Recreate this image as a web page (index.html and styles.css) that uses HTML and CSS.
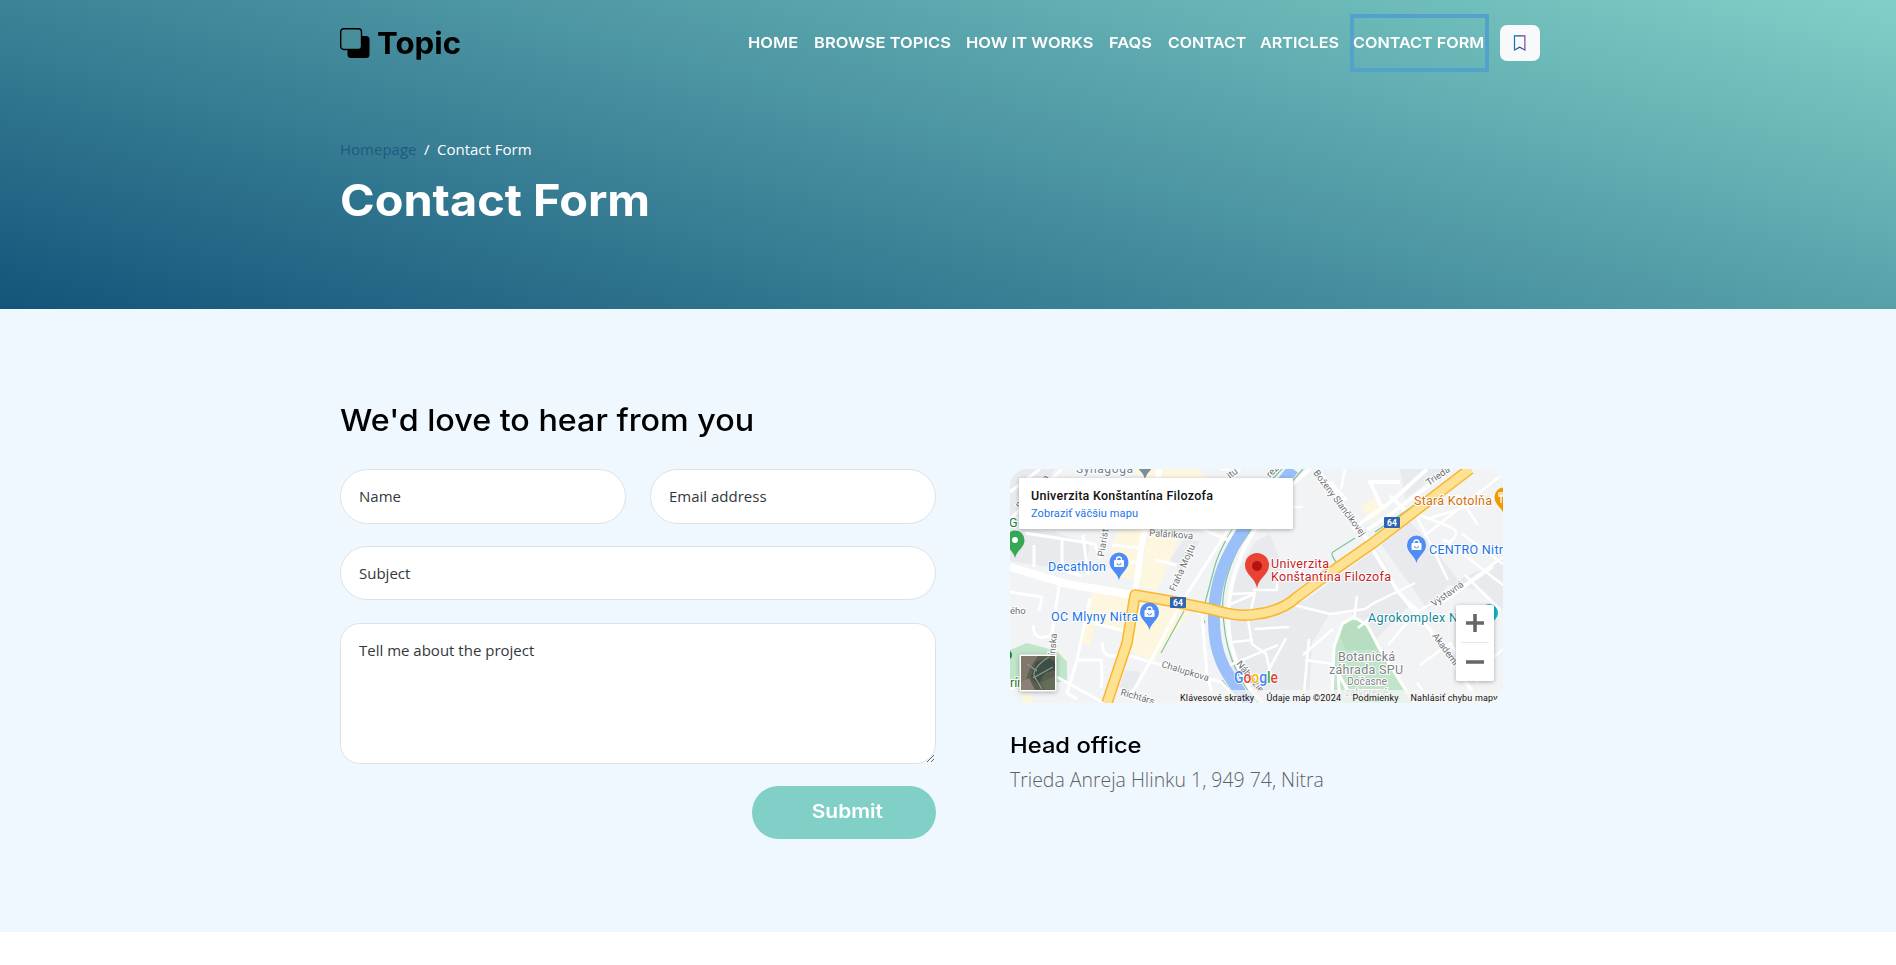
FILE: index.html
```html
<!DOCTYPE html>
<html lang="en">
<head>
<meta charset="utf-8">
<title>Contact Form</title>
<link rel="stylesheet" href="styles.css">
</head>
<body>
<header class="hero">
  <nav class="nav">
    <a class="brand"><svg class="brand-icon" width="30" height="31" viewBox="0 0 30 31"><rect x="7.5" y="8" width="22" height="22" rx="3.5"/><rect class="brand-clear" x=".7" y=".7" width="20.8" height="20.8" rx="3"/></svg><span class="brand-name">Topic</span></a>
    <div class="links">
      <a class="link l1"><span class="label">HOME</span></a><a class="link l2"><span class="label">BROWSE TOPICS</span></a><a class="link l3"><span class="label">HOW IT WORKS</span></a><a class="link l4"><span class="label">FAQS</span></a><a class="link l5"><span class="label">CONTACT</span></a><a class="link l6"><span class="label">ARTICLES</span></a><a class="link l7 focused"><span class="label">CONTACT FORM</span></a>
      <a class="bookmark"><svg width="14" height="16" viewBox="0 0 14 16"><defs><linearGradient id="bm"><stop stop-color="#0876b5"/><stop offset=".5" stop-color="#33466d"/><stop offset="1" stop-color="#81479b"/></linearGradient></defs><path d="M1.5 .8h10.4V15L6.7 12.3 1.5 15z" fill="none" stroke="url(#bm)" stroke-width="1.2"/></svg></a>
    </div>
  </nav>
  <div class="crumbs"><span class="crumb-home">Homepage</span><span>/</span><span class="crumb-here">Contact Form</span></div>
  <h1 class="title">Contact Form</h1>
</header>
<main class="main">
  <h2 class="heading">We'd love to hear from you</h2>
  <div class="columns">
    <form class="form">
      <input class="field" placeholder="Name">
      <input class="field" placeholder="Email address">
      <input class="field wide subject" placeholder="Subject">
      <textarea class="field wide message" placeholder="Tell me about the project"></textarea>
      <button class="submit" type="button"><span class="submit-label">Submit</span></button>
    </form>
    <aside class="office">
      <svg class="map" width="493" height="234" viewBox="1010 469 493 234">
        <defs>
          <g id="pin"><path d="M0 18C-2 10-9.5 8-9.5 0a9.5 9.5 0 0 1 19 0C9.500 8 2 10 0 18z"/></g>
          <g id="bag"><rect x="-5" y="-2" width="10" height="7" rx="1" fill="#fff"/><path d="M-2.500-1v-1.500a2.500 2.500 0 0 1 5 0V-1" fill="none" stroke="#fff" stroke-width="1.300"/><path d="M-2 1a2 2 0 0 0 4 0" fill="none" stroke="#4f8df5"/></g>
        </defs>
        <rect x="1010" y="469" width="493" height="234" fill="#f1f3f4"/>
        <!-- built-up and campus areas -->
        <g fill="#e8eaed">
          <path d="M1235 575l20-33 15-8 8 20 4 22h20l13 5-27 19-35 14-25-2z"/>
          <path d="M1228 618l30 2 48-20 70-51 22 38 12 18-40 40-20-35-20 3-18 30-3 60h-60l-18-35z"/>
          <path d="M1378 540l30-20 20 20 30 40 45-20v50l-20-20-35-5-20 25-25-35z"/>
          <path d="M1010 469h45l-20 30-25 20zM1010 528l45 4 35 13-5 28-75-12zM1125 670l15 2-5 18-15-2z"/>
          <path d="M1400 469h45l-40 30zM1170 560l15-22 15 3-18 30z"/>
        </g>
        <g fill="#fef7e0">
          <path d="M1127 469h70l12 10h-60zM1118 532l26-3-2 52-27-5-3-30zM1148 529l34 2-25 60-17-4zM1092 590l38 6-8 36-27-7-5 21-8-2zM1140 603l50 9-36 49-25-10zM1361 506l16-10 8 14-14 11zM1160 540l15 6-10 16-15-4zM1022 703v-8l8-3 4 11z"/>
        </g>
        <path d="M1010 650l17-7 30 8 10 11v20h-57z" fill="#c1e5c9"/>
        <path d="M1332 703l3-58 7-20 12-8 13 7 14 26 33 53z" fill="#c1e5c9"/>
        <path d="M1346 650c-12-20 0-30 9-30s16 12 22 30z" fill="#b7dec0"/>
        <!-- parkway lines -->
        <g fill="none" stroke="#7dc696" stroke-width="1.200">
          <path d="M1282 469q-58 60-68 100l-10 38M1303 469q-20 24-45 50l-20 30q-20 40-14 75 4 45 34 79M1184 611l-23 42M1188 603l12 8 5 12M1355 538l-22 14q-3 2 3 10M1375 532l50-34 42-29M1222 680l14 18"/>
        </g>
        <path d="M1293 469C1270 500 1255 510 1243 530S1215 573 1214 615s12 58 34 88" fill="none" stroke="#9bbff9" stroke-width="12"/>
        <!-- side streets -->
        <g fill="none" stroke="#fff" stroke-width="3" stroke-linejoin="round">
          <path d="M1010 519l52-50M1010 492l30-23M1025 533l70 11 5 14M1062 540v30l20 6M1034 545v22M1083 535l5 40M1060 580l-10 67M1010 592l32 5-3 14M1033 625q1 18 18 10M1090 598l-13 62-10 33 10 6M1077 660h24q2 16 0 28M1090 622l38 10M1103 642q-2 10 6 14h16M1057 677l47 26M1010 690l15-10"/>
          <path d="M1127 655l24 7 70 20 20 21M1228 530l-45 70-33 62-18 31M1200 528l28 12 12-20M1187 603l15 12 5 60 8 28M1115 563l28-1M1112 545l30 3M1120 485l5-16M1250 483h17M1220 469h10M1240 469l-30 40M1155 560l22 5"/>
          <path d="M1232 594l23-1-5 20M1231 604l23-10M1253 590h24v-12l33-1M1248 620l4 24 14 10 7 30M1255 629l34-2M1233 642l20-2M1286 638l-20 37-20 5M1309 639l-6 64M1305 660l28 4M1303 655l30-26M1294 605l36 9 35-5 12-8M1357 596l-3 24M1370 618l-12 10M1230 665l48-20" stroke-width="2.500"/>
          <path d="M1367 530l24-16 60-45M1352 529l40-28 35-32M1382 508l-12-26 30 0M1390 496l15 14M1330 482l16 18M1317 469l46 64 34 57 33 40 50 73" stroke-width="3.800"/>
          <path d="M1303 507h-18M1345 469l-4 20M1415 513l35 14q12 5 0 15l-8-2M1415 513l15 30 18 37M1424 536l79-62M1430 518l73-22M1417 612l50-29 36-26M1400 595l18 15-30 35M1445 540l58 45M1462 534l41 30M1443 602l50-35M1465 575l35 35M1370 605l45-22M1420 665l30-22 28 40M1432 703l-15-20M1480 669l23-20M1478 525l-20-30" stroke-width="2.500"/>
          <path d="M1332 703l2-56 8-23 12-7 13 8 14 26 33 52M1340 703l-2-30 10 18"/>
        </g>
        <path d="M1310 469q-42 35-65 77-26 60-12 105 10 35 30 52" fill="none" stroke="#fff" stroke-width="4"/>
        <path d="M1010 567l57 17 66 11" fill="none" stroke="#fff" stroke-width="8"/>
        <path d="M1135 593l8-56 17-68" fill="none" stroke="#fff" stroke-width="6"/>
        <!-- route 64 -->
        <g fill="none" stroke-linejoin="round"><path d="M1107 703l20-60 8-48 35 6 40 8q30 9 47 5 25-3 40-17l27-20 49-34 97-74" stroke="#f9b62e" stroke-width="11.500"/><path d="M1107 703l20-60 8-48 35 6 40 8q30 9 47 5 25-3 40-17l27-20 49-34 97-74" stroke="#fde293" stroke-width="8.500"/></g>
        <g class="shield"><rect x="1170" y="597" width="16" height="11" rx="1"/><text x="1178" y="606">64</text><rect x="1384" y="517" width="16" height="11" rx="1"/><text x="1392" y="526">64</text></g>
        <!-- street names -->
        <g class="street">
          <text x="1076" y="473" class="poi" textLength="57">Synagoga</text>
          <text transform="translate(1149 536) rotate(4)" textLength="44">Palárikova</text>
          <text transform="translate(1175 592) rotate(-66)" textLength="50">Fraňa Mojtu</text>
          <text transform="translate(1104 557) rotate(-81)" textLength="28">Piarist</text>
          <text transform="translate(1313 473) rotate(53)" textLength="80">Boženy Slančíkovej</text>
          <text transform="translate(1429 486) rotate(-35)">Trieda A</text>
          <text transform="translate(1434 607) rotate(-35)" textLength="37">Výstavná</text>
          <text transform="translate(1432 636) rotate(54)">Akademi</text>
          <text transform="translate(1161 667) rotate(17)" textLength="49">Chalupkova</text>
          <text transform="translate(1120 695) rotate(16)">Richtárs</text>
          <text transform="translate(1236 664) rotate(51)">Nábrežie</text>
          <text x="1010" y="614">ého</text>
          <text transform="translate(1055 656) rotate(-85)">ínska</text>
          <text transform="translate(1043 485) rotate(-48)">va</text>
          <text transform="translate(1230 479) rotate(-38)">itu</text>
          <text transform="translate(1270 478) rotate(-45)">rež</text>
          <text transform="translate(1020 508) rotate(-60)">p</text>
        </g>
        <!-- places -->
        <g class="place">
          <g fill="#4f8df5"><use href="#pin" x="1119" y="562"/><use href="#pin" x="1149.500" y="612"/><use href="#pin" x="1416.500" y="545"/></g>
          <use href="#bag" x="1119" y="562"/><use href="#bag" x="1149.500" y="612"/><use href="#bag" x="1416.500" y="545"/>
          <use href="#pin" x="1015" y="540" fill="#34a853"/><circle cx="1015" cy="540" r="3" fill="#fff"/>
          <use href="#pin" x="1145" y="461" fill="#78909c"/>
          <use href="#pin" x="1504" y="497" fill="#f29900"/><path d="M1501 492v5m0 0v6m-2-11v4h4v-4" fill="none" stroke="#fff" stroke-width="1.300"/>
          <circle cx="1489" cy="613" r="9" fill="#12b5cb"/>
          <path d="M1257 588c-2-11-12-13-12-23a12 12 0 0 1 24 0c0 10-10 12-12 23z" fill="#ea4335"/><circle cx="1257" cy="566" r="5" fill="#b31412"/>
          <circle cx="1007" cy="655" r="5" fill="#188038"/>
          <g fill="#1a73e8"><text x="1048" y="571" textLength="58">Decathlon</text><text x="1051" y="621" textLength="87">OC Mlyny Nitra</text><text x="1429" y="554" textLength="74">CENTRO Nitr</text></g>
          <text x="1414" y="505" fill="#d56e0c" textLength="78">Stará Kotolňa</text>
          <g fill="#c5221f"><text x="1271" y="568" textLength="58">Univerzita</text><text x="1271" y="581" textLength="120">Konštantína Filozofa</text></g>
          <text x="1368" y="622" fill="#12889b" textLength="90">Agrokomplex N</text>
          <g fill="#188038"><text x="1009" y="527">G</text><text x="1010" y="687">rín</text></g>
          <g fill="#7c8286"><text x="1338" y="661" textLength="57">Botanická</text><text x="1329" y="674" textLength="74">záhrada SPU</text><text x="1347" y="685" class="sub" textLength="40">Dočasne</text><text x="1345" y="696" class="sub" textLength="43">zatvorené</text></g>
        </g>
        <text class="google" x="1234" y="683" textLength="44" lengthAdjust="spacingAndGlyphs"><tspan fill="#4285f4">G</tspan><tspan fill="#ea4335">o</tspan><tspan fill="#fbbc04">o</tspan><tspan fill="#4285f4">g</tspan><tspan fill="#34a853">l</tspan><tspan fill="#ea4335">e</tspan></text>
        <rect x="1177" y="690" width="326" height="13" fill="#f5f5f5" fill-opacity=".75"/>
        <g class="legal"><text x="1180" y="701" textLength="74">Klávesové skratky</text><text x="1266.500" y="701" textLength="74.500">Údaje máp ©2024</text><text x="1352.500" y="701" textLength="46">Podmienky</text><text x="1410.500" y="701" textLength="87">Nahlásiť chybu mapy</text></g>
        <!-- satellite toggle -->
        <g class="raised"><rect x="1019.500" y="654.500" width="37" height="37" rx="1.500" fill="#fff"/><rect x="1021" y="656" width="34" height="34" fill="#595e50"/></g>
        <path d="M1021 656h17l-8 12-4 12-5 4z" fill="#81766a"/><path d="M1036 662l12-4 7 4v8l-10 3-7 12-7-8z" fill="#3c4f46"/><path d="M1021 682l8-4 6 12h-14z" fill="#8b8078"/><path d="M1041 683l14-7v14h-10z" fill="#626e58"/><path d="M1049 657q-16 10-15 19l8 13M1033 678l20-11M1027 664l10 7" fill="none" stroke="#8f9a8b" stroke-width="1.200"/>
        <!-- place card -->
        <rect class="raised" x="1019" y="478" width="274" height="51" rx="1" fill="#fff"/>
        <text class="card-title" x="1031" y="500" textLength="182">Univerzita Konštantína Filozofa</text><text class="card-link" x="1031" y="517" textLength="107">Zobraziť väčšiu mapu</text>
        <!-- zoom buttons -->
        <rect class="raised" x="1456" y="605" width="38" height="76" rx="2" fill="#fff"/>
        <path d="M1466 623h18M1475 614v18M1466 662h18" stroke="#666" stroke-width="3.600"/><path d="M1461 642.500h28" stroke="#e6e6e6"/>
      </svg>
      <h3 class="office-title">Head office</h3>
      <p class="address">Trieda Anreja Hlinku 1, 949 74, Nitra</p>
    </aside>
  </div>
</main>
</body>
</html>
```
FILE: styles.css
```css
body { margin: 0; background: #fff; font-family: "Open Sans", sans-serif; }
.hero { height: 309px; box-sizing: border-box; padding: 0 356px 0 340px; background: linear-gradient(15deg, #13547a 0%, #80d0c7 100%); }
.nav { display: flex; justify-content: space-between; height: 86px; align-items: center; font-family: Inter, sans-serif; }
.brand { display: flex; align-items: center; gap: 7px; margin-left: -.5px; }
.brand-name { font-size: 30px; font-weight: 700; transform: scaleX(1.04); transform-origin: left; }
.brand-clear { fill: #488f9b; stroke: #000; stroke-width: 1.4; }
.links { display: flex; align-items: center; }
.link { color: #fff; font-size: 15px; line-height: 18px; font-weight: 600; white-space: nowrap; padding: 16px 0; }
.label { display: inline-block; margin-left: -1px; transform: scaleX(1.1); transform-origin: left; }
.l1 { width: 66px; }
.l2 { width: 152px; }
.l3 { width: 143.5px; }
.l4 { width: 58.5px; }
.l5 { width: 92px; }
.l6 { width: 93.5px; }
.l7 { width: 131px; margin-right: 15px; }
.focused { outline: 4px solid #52a2ca; }
.l5 .label { transform: scaleX(1.06); }
.l6 .label, .l7 .label { transform: scaleX(1.08); }
.bookmark { display: flex; align-items: center; justify-content: center; width: 40px; height: 36px; border-radius: 7px; background: #f8f9fa; }
.crumbs { display: flex; gap: 7.5px; margin-top: 52px; font-size: 15px; line-height: 22px; color: #fff; }
.crumb-home { color: #1d5b81; }
.title { margin: 11px 0 0; font: 700 44px/58px Inter, sans-serif; transform: scaleX(1.065); transform-origin: left; color: #fff; }
.main { height: 623px; box-sizing: border-box; padding: 93px 0 0 340px; background: #f0f8ff; }
.heading { margin: 0; width: 600px; font: 500 30px/36px Inter, sans-serif; transform: scaleX(1.075); transform-origin: left; }
.columns { display: flex; gap: 74px; margin-top: 31px; }
.form { display: grid; grid-template-columns: 286px 286px; grid-template-rows: 55px 55px 141px 53px; gap: 22px 24px; width: 596px; }
.field { box-sizing: border-box; width: 100%; height: 55px; padding: 0 18px 2px; border: 1px solid #dee2e6; border-radius: 28px; font: 400 15px "Open Sans", sans-serif; }
.field::placeholder { color: #33383d; opacity: 1; }
.wide { grid-column: span 2; }
.subject { height: 54px; padding-bottom: 1px; }
.message { height: 141px; padding-top: 16px; border-radius: 20px; }
.submit { grid-column: 2; justify-self: end; width: 184px; height: 53px; padding: 0 0 2px 7px; border: 0; border-radius: 27px; background: #80d0c7; color: #fff; font: 600 19px Inter, sans-serif; }
.submit-label { display: inline-block; transform: scaleX(1.1); }
.map { display: block; border-radius: 18px; font-family: Roboto, sans-serif; }
.street { font-size: 9.5px; fill: #6b6f73; stroke: #fff; stroke-width: 2px; paint-order: stroke; }
.poi { font-size: 12px; fill: #6f8591; }
.place text { font-size: 12.5px; stroke: #fff; stroke-width: 2px; paint-order: stroke; }
.place .sub { font-size: 10.5px; }
.shield { fill: #2f64ae; }
.shield text { fill: #fff; font-size: 8.5px; font-weight: 700; text-anchor: middle; }
.google { font-size: 17px; font-weight: 500; stroke: #fff; stroke-width: 1.5px; paint-order: stroke; }
.legal { font-size: 9px; fill: #111; }
.raised { filter: drop-shadow(0 1px 2px rgba(0, 0, 0, .3)); }
.card-title { font-size: 12.5px; font-weight: 500; fill: #111; }
.card-link { font-size: 11px; fill: #1a73e8; }
.office-title { margin: 27px 0 0; font: 500 22px/30px Inter, sans-serif; transform: scaleX(1.08); transform-origin: left; }
.address { margin: 7px 0 0; color: #5f6163; font-size: 19.45px; line-height: 26px; font-weight: 300; }
```
